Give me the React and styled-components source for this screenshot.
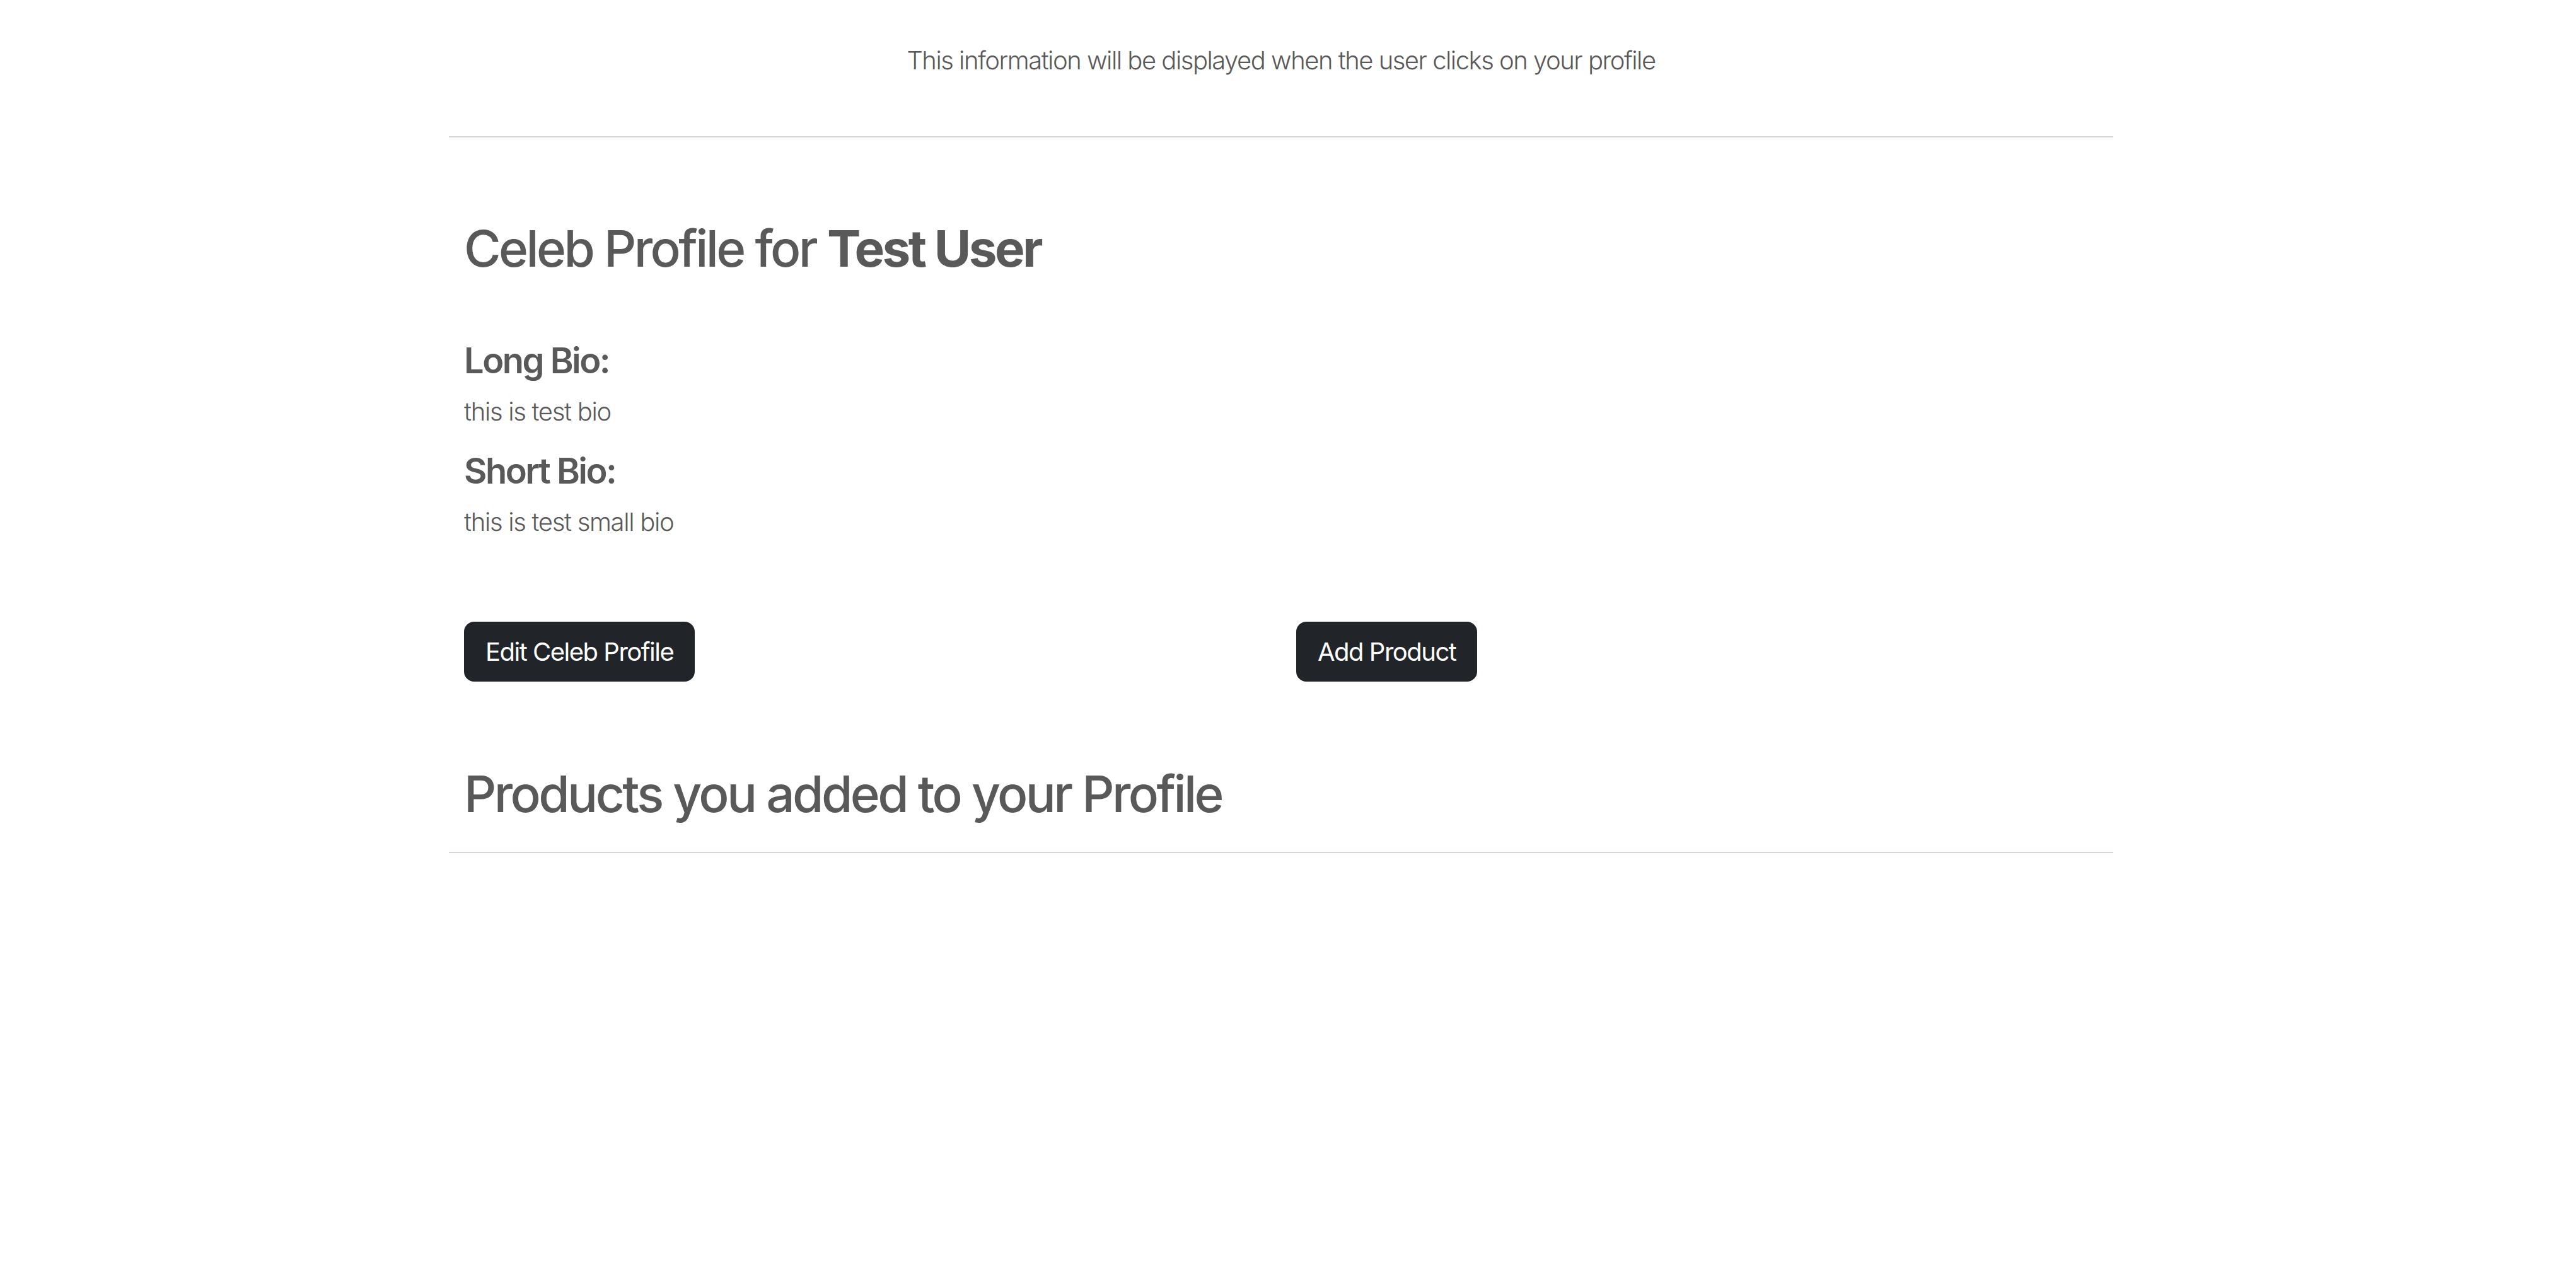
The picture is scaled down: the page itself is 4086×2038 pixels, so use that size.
import React from "react";
import styled, { createGlobalStyle } from "styled-components";

const GlobalStyle = createGlobalStyle`
  html, body {
    margin: 0;
    padding: 0;
    background: #ffffff;
  }
  body {
    font-family: Inter, "Noto Sans", "Liberation Sans", sans-serif;
    color: #595959;
  }
  * { box-sizing: border-box; }
`;

const Page = styled.div`
  padding-right: 22px;
  min-height: 2038px;
`;

const Container = styled.main`
  max-width: 2640px;
  margin: 0 auto;
`;

const Intro = styled.p`
  margin: 0;
  padding-top: 66px;
  text-align: center;
  font-size: 40px;
  line-height: 60px;
  font-weight: 300;
  color: #595959;
  letter-spacing: -1.5px;
`;

const Divider = styled.hr`
  margin: ${(p) => p.$top}px 0 0;
  border: 0;
  border-top: 2px solid #d6d6d6;
  height: 0;
`;

const Section = styled.section`
  padding: 0 24px;
`;

const Title = styled.h1`
  margin: ${(p) => p.$top}px 0 0;
  font-size: 80px;
  line-height: 96px;
  font-weight: 500;
  color: #595959;
  letter-spacing: -3.6px;

  strong {
    font-weight: 700;
  }
`;

const BioLabel = styled.h3`
  margin: ${(p) => p.$top}px 0 0;
  font-size: 56px;
  line-height: 67px;
  font-weight: 600;
  color: #595959;
  letter-spacing: -2.5px;
`;

const BioText = styled.p`
  margin: ${(p) => p.$top}px 0 0;
  font-size: 40px;
  line-height: 60px;
  font-weight: 300;
  color: #595959;
  letter-spacing: -1.3px;
`;

const ButtonRow = styled.div`
  display: grid;
  grid-template-columns: 1fr 1fr;
  column-gap: 48px;
  margin-top: 128px;
  align-items: start;
`;

const DarkButton = styled.button`
  justify-self: start;
  font-family: inherit;
  font-size: 40px;
  line-height: 59px;
  font-weight: 400;
  color: #ffffff;
  background: #212529;
  border: 2px solid #212529;
  border-radius: 16px;
  padding: 16px 32px;
  cursor: pointer;
  letter-spacing: -1.5px;
`;

export default function App() {
  return (
    <Page>
      <GlobalStyle />
      <Container>
        <Intro>This information will be displayed when the user clicks on your profile</Intro>
        <Divider $top={90} />
        <Section>
          <Title $top={128}>
            Celeb Profile for <strong>Test User</strong>
          </Title>
          <BioLabel $top={97}>Long Bio:</BioLabel>
          <BioText $top={17}>this is test bio</BioText>
          <BioLabel $top={31}>Short Bio:</BioLabel>
          <BioText $top={17}>this is test small bio</BioText>
          <ButtonRow>
            <DarkButton type="button">Edit Celeb Profile</DarkButton>
            <DarkButton type="button">Add Product</DarkButton>
          </ButtonRow>
          <Title $top={130}>Products you added to your Profile</Title>
        </Section>
        <Divider $top={44} />
      </Container>
    </Page>
  );
}
